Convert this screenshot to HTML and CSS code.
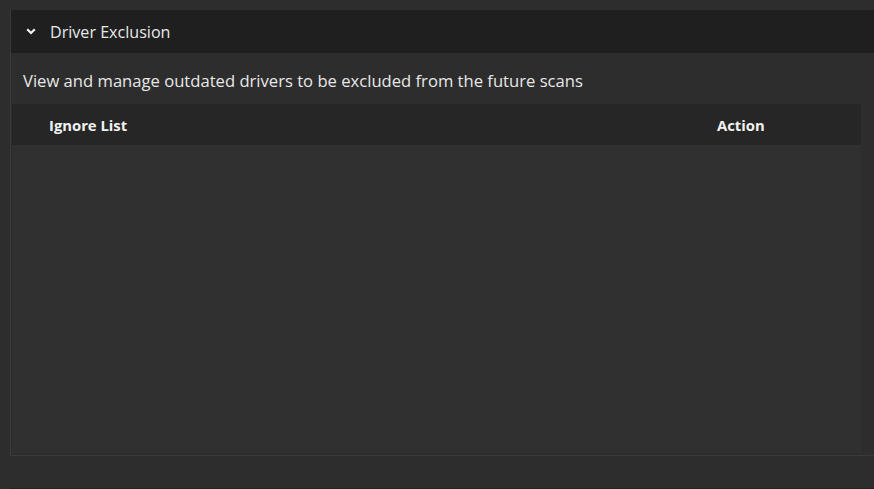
FILE: index.html
```html
<!DOCTYPE html>
<html>
<head>
<meta charset="utf-8">
<link rel="stylesheet" href="styles.css">
</head>
<body>
<div class="page">
  <div class="panel">
    <div class="header">
      <svg class="chev" width="10" height="7" viewBox="0 0 10 7"><path d="M1.2 1.3 L5 5 L8.8 1.3" fill="none" stroke="#f2f2f2" stroke-width="2.2"/></svg>
      <span class="title">Driver Exclusion</span>
    </div>
    <div class="desc">View and manage outdated drivers to be excluded from the future scans</div>
    <div class="table">
      <div class="thead">
        <span class="col-name">Ignore List</span>
        <span class="col-action">Action</span>
      </div>
      <div class="tbody"></div>
    </div>
  </div>
  <div class="footer"></div>
</div>
</body>
</html>
```
FILE: styles.css
```css
html, body {
  margin: 0;
  padding: 0;
  background: #2d2d2d;
  font-family: "Open Sans", "Noto Sans", sans-serif;
  color: #e6e6e6;
}
.page {
  width: 874px;
  height: 489px;
  display: flex;
  flex-direction: column;
  padding: 10px 0 0 10px;
  box-sizing: border-box;
}
.panel {
  height: 446px;
  border-left: 1px solid #3a3a3a;
  border-bottom: 1px solid #3a3a3a;
  box-sizing: border-box;
  display: flex;
  flex-direction: column;
}
.header {
  height: 43px;
  background: #1f1f1f;
  display: flex;
  align-items: center;
  padding-left: 15px;
  flex-shrink: 0;
}
.chev {
  display: block;
  margin-right: 14px;
}
.title {
  font-size: 16.1px;
  color: #e8e8e8;
}
.desc {
  height: 51px;
  box-sizing: border-box;
  padding: 3px 0 0 12px;
  display: flex;
  align-items: center;
  font-size: 16.62px;
  color: #e8e8e8;
  flex-shrink: 0;
}
.table {
  margin: 0 13px 2px 1px;
  flex: 1;
  display: flex;
  flex-direction: column;
}
.thead {
  height: 41px;
  background: #262626;
  display: flex;
  align-items: center;
  font-size: 14.8px;
  font-weight: 700;
  color: #f2f2f2;
  flex-shrink: 0;
}
.col-name {
  margin-left: 37px;
  width: 668px;
}
.tbody {
  flex: 1;
  background: #303030;
}
.footer {
  flex: 1;
  border-bottom: 1px solid #232323;
}
```
